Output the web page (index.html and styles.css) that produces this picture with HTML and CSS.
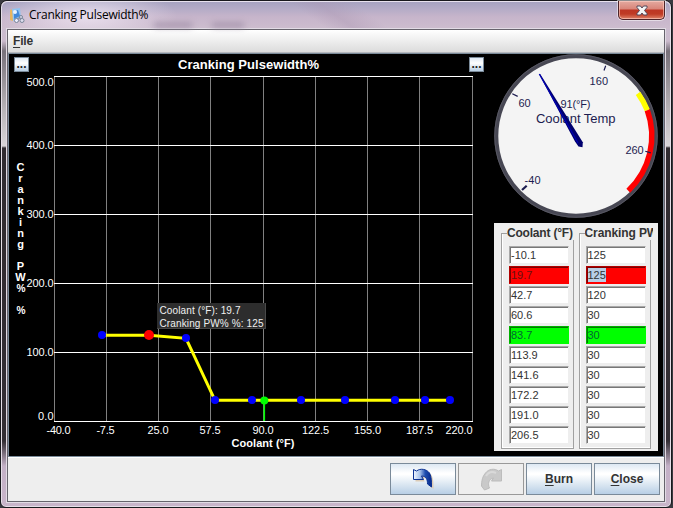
FILE: index.html
```html
<!DOCTYPE html>
<html lang="en">
<head>
    <meta charset="UTF-8">
    <title>Cranking Pulsewidth%</title>
    <link rel="stylesheet" href="styles.css">
</head>
<body>
    <div class="window">
        <div class="titlebar">
            <svg class="app-icon" width="16" height="16" viewBox="0 0 16 16">
                <path d="M1 2l3-1v12l-3-1z" fill="#e9b55c"/>
                <path d="M3 1l8-1 1 10-8 3z" fill="#91c4f0"/>
                <path d="M5 3l4-1 2 6-6 3z" fill="#4389d8"/>
                <circle cx="6" cy="4" r="2" fill="#e8f4ff"/>
                <path d="M7 12l5-3" stroke="#8898ae" stroke-width="2"/>
                <circle cx="7.500" cy="12.500" r="2" fill="#eef" stroke="#78869a"/>
                <circle cx="13" cy="12.500" r="2" fill="#dde" stroke="#78869a"/>
                <circle cx="12" cy="9" r="1.500" fill="#dde" stroke="#78869a"/>
            </svg>
            <span class="window-title">Cranking Pulsewidth%</span>
            <span class="smudge smudge-wide"></span>
            <span class="smudge"></span>
            <button class="window-close" aria-label="Close window">
                <svg width="12" height="11" viewBox="0 0 12 11">
                    <path d="M1 1h3.500L6 3 7.500 1H11v1.500L8.500 5.500 11 8.500V10H7.500L6 8 4.500 10H1V8.500l2.500-3L1 2.500z" fill="#f4f4f4" stroke="#53485a"/>
                </svg>
            </button>
        </div>

        <div class="client">
            <div class="menubar"><span class="menu"><u>F</u>ile</span></div>

            <div class="content">
                <div class="chart">
                    <svg width="479" height="402" viewBox="9 54 479 402">
                        <g class="grid-v">
                            <path d="M54.500 76V421M106.500 76V421M158.500 76V421M210.500 76V421M263.500 76V421M315.500 76V421M367.500 76V421M419.500 76V421M472.500 76V421"/>
                        </g>
                        <g class="grid-h">
                            <path d="M54 76.500H473M54 145.500H473M54 214.500H473M54 283.500H473M54 352.500H473M54 421.500H473"/>
                        </g>
                        <text class="chart-title" x="178" y="69" textLength="141">Cranking Pulsewidth%</text>
                        <g class="ticks">
                            <text x="26.500" y="86" textLength="27">500.0</text>
                            <text x="26.500" y="149" textLength="27">400.0</text>
                            <text x="26.500" y="218" textLength="27">300.0</text>
                            <text x="26.500" y="287" textLength="27">200.0</text>
                            <text x="26.500" y="356" textLength="27">100.0</text>
                            <text x="38" y="420" textLength="15.500">0.0</text>
                            <text x="46.500" y="434" textLength="24">-40.0</text>
                            <text x="96.500" y="434" textLength="18">-7.5</text>
                            <text x="147.500" y="434" textLength="21">25.0</text>
                            <text x="199.500" y="434" textLength="21">57.5</text>
                            <text x="252.500" y="434" textLength="21">90.0</text>
                            <text x="302" y="434" textLength="27">122.5</text>
                            <text x="354" y="434" textLength="27">155.0</text>
                            <text x="406" y="434" textLength="27">187.5</text>
                            <text x="445.500" y="434" textLength="27">220.0</text>
                        </g>
                        <text class="axis-x" x="231.500" y="447" textLength="63">Coolant (°F)</text>
                        <g class="axis-y">
                            <text x="20.500" y="171">C</text>
                            <text x="20.500" y="182">r</text>
                            <text x="20.500" y="193">a</text>
                            <text x="20.500" y="204">n</text>
                            <text x="20.500" y="215">k</text>
                            <text x="20.500" y="226">i</text>
                            <text x="20.500" y="237">n</text>
                            <text x="20.500" y="248">g</text>
                            <text x="20.500" y="270">P</text>
                            <text x="20.500" y="281">W</text>
                            <text class="percent" x="16.500" y="292" textLength="9" lengthAdjust="spacingAndGlyphs">%</text>
                            <text class="percent" x="16.500" y="314" textLength="9" lengthAdjust="spacingAndGlyphs">%</text>
                        </g>

                        <path class="curve" d="M102 335.300H149L186 338.300 215 400.300H450"/>
                        <g class="points">
                            <circle cx="102" cy="335" r="4"/>
                            <circle cx="186" cy="338" r="4"/>
                            <circle cx="215" cy="400" r="4"/>
                            <circle cx="252" cy="400" r="4"/>
                            <circle cx="301" cy="400" r="4"/>
                            <circle cx="345" cy="400" r="4"/>
                            <circle cx="395" cy="400" r="4"/>
                            <circle cx="425" cy="400" r="4"/>
                            <circle cx="450" cy="400" r="4"/>
                        </g>
                        <circle cx="149" cy="335" r="5" fill="#f00"/>
                        <path d="M264.300 400V421" stroke="#0f0" stroke-width="1.600"/>
                        <circle cx="264.300" cy="400.500" r="4" fill="#0f0"/>

                        <rect x="157" y="303" width="109" height="26" fill="#2d2d2d"/>
                        <path d="M157 328.500H265.500V303" fill="none" stroke="#484848"/>
                        <g class="tip">
                            <text x="159.500" y="314" textLength="81">Coolant (°F): 19.7</text>
                            <text x="159.500" y="327" textLength="104">Cranking PW% %: 125</text>
                        </g>
                    </svg>
                    <button class="more more-left">...</button>
                    <button class="more more-right">...</button>
                </div>

                <div class="side">
                    <svg class="gauge" width="164" height="165" viewBox="494 54 164 165">
                        <circle cx="576" cy="136" r="79.700" fill="#f4f4f4" stroke="#474753" stroke-width="4"/>
                        <circle cx="576" cy="136" r="81.300" fill="none" stroke="#5d5d68" stroke-width=".8"/>
                        <path d="M638 93.300A75.500 75.500 0 0 1 647.300 110.300" fill="none" stroke="#ff0" stroke-width="5.500"/>
                        <path d="M647.300 110.300A75.500 75.500 0 0 1 628.300 190.700" fill="none" stroke="#f00" stroke-width="5.500"/>
                        <g stroke="#1c1c50" stroke-width="1.200">
                            <path d="M605.700 65.700l-1.700 4.800M512.300 93.700l5.400 2.700M645.300 151.200l5.500 1.700"/>
                            <path d="M526.700 185.700l-4.700 4.300" stroke-width="2.200"/>
                        </g>
                        <g class="gauge-text">
                            <text x="589.500" y="85" textLength="18.500">160</text>
                            <text x="518.500" y="107" textLength="12">60</text>
                            <text x="625.500" y="154" textLength="18">260</text>
                            <text x="524.500" y="184" textLength="16">-40</text>
                            <text x="560.500" y="108" textLength="30">91(°F)</text>
                            <text class="gauge-name" x="536" y="123" textLength="79.500">Coolant Temp</text>
                        </g>
                        <path d="M539 74l1.200 0L582.800 142.300 582.500 147.300 578.500 146.500 575 141.500z" fill="#00006e"/>
                        <path d="M539.300 74L578 143" stroke="#0000b4" stroke-width="1.200"/>
                    </svg>

                    <div class="table">
                        <fieldset class="column column-x">
                            <legend>Coolant (°F)</legend>
                            <div class="cell">-10.1</div>
                            <div class="cell selected">19.7</div>
                            <div class="cell">42.7</div>
                            <div class="cell">60.6</div>
                            <div class="cell active">83.7</div>
                            <div class="cell">113.9</div>
                            <div class="cell">141.6</div>
                            <div class="cell">172.2</div>
                            <div class="cell">191.0</div>
                            <div class="cell">206.5</div>
                        </fieldset>
                        <fieldset class="column">
                            <legend>Cranking PW</legend>
                            <div class="cell">125</div>
                            <div class="cell selected"><span class="highlight">125</span></div>
                            <div class="cell">120</div>
                            <div class="cell">30</div>
                            <div class="cell active">30</div>
                            <div class="cell">30</div>
                            <div class="cell">30</div>
                            <div class="cell">30</div>
                            <div class="cell">30</div>
                            <div class="cell">30</div>
                        </fieldset>
                    </div>
                </div>
            </div>

            <div class="buttons">
                <button class="btn" aria-label="Undo">
                    <svg width="24" height="24" viewBox="0 0 24 24">
                        <defs>
                            <linearGradient id="undo" x1="0" y1="0" x2="1" y2="0">
                                <stop offset="0" stop-color="#f0f6ff"/>
                                <stop offset=".35" stop-color="#a9c3ea"/>
                                <stop offset=".65" stop-color="#1f4fb0"/>
                                <stop offset="1" stop-color="#06288c"/>
                            </linearGradient>
                        </defs>
                        <path d="M3 3l3 1.500c4-3 10-2 13 2 2 4 2 8 2 14l-4-3c0-4-1-8-6-8l1 3.500H3z" fill="#dccbb5" transform="translate(1.500 1.500)"/>
                        <path d="M2.500 2.500l3 1.500c4-3 10-2 13 2 2 4 2 8 2 14l-4-3c0-4-1-8-6-8l2 3.500h-10z" fill="url(#undo)" stroke="#0b3192"/>
                    </svg>
                </button>
                <button class="btn btn-disabled" disabled aria-label="Redo">
                    <svg width="24" height="24" viewBox="0 0 24 24">
                        <path d="M22.500 2.500l-3 1.500c-4-3-10-2-13 2-3 3-4 8-4 13l3 4 5-2c-2-4-1-9 4-10l-2 3h10z" fill="#c9c9c9" stroke="#bcbcbc"/>
                        <path d="M17 6c-4-2-8-1-10 3" fill="none" stroke="#d9d9d9" stroke-width="2"/>
                    </svg>
                </button>
                <button class="btn"><span><u>B</u>urn</span></button>
                <button class="btn"><span><u>C</u>lose</span></button>
            </div>
        </div>
    </div>
</body>
</html>
```
FILE: styles.css
```css
* {
    box-sizing: border-box;
}

body {
    margin: 0;
    width: 673px;
    height: 508px;
    overflow: hidden;
    background: #3a3a40;
    font-family: "Liberation Sans", Arial, sans-serif;
}

button {
    margin: 0;
    padding: 0;
    font-family: inherit;
}

.window {
    width: 672px;
    height: 508px;
    padding: 0 6px 5px;
    border: 1px solid #19191d;
    border-radius: 7px 7px 6px 6px;
    box-shadow: inset 0 0 0 1px #e6dfe8;
    background: linear-gradient(180deg, #c8bfd3 0, #cbbbcd 40px, #77717a 50px, #b9b5b9 110px, #d8d5d8 145px, #302b30 147px, #332e34 440px, #c3b0c6 465px, #c9b5ca 100%);
}

.titlebar {
    display: flex;
    height: 28px;
    margin: 0 -5px;
    padding-left: 7px;
    border-top: 1px solid #e8e2ee;
    border-radius: 6px 6px 0 0;
    background:
        radial-gradient(ellipse 90px 28px at 85px 14px, rgba(244, 236, 248, .75), transparent),
        linear-gradient(35deg, transparent 46%, rgba(170, 150, 178, .4) 50%, transparent 55%),
        linear-gradient(180deg, #a7a3c1 0, #b9aec8 9px, #c7b5cb 15px, #cdbdce 100%);
}

.app-icon {
    margin-top: 6px;
}

.window-title {
    margin: 5px 0 0 4px;
    width: 121px;
    font: 12px/16px "Open Sans", "Noto Sans", sans-serif;
    letter-spacing: -.25px;
    white-space: nowrap;
    color: #000;
}

.smudge {
    width: 32px;
    height: 4px;
    margin: 21px 0 0 20px;
    background: #9c8ba4;
    filter: blur(3px);
}

.smudge-wide {
    width: 38px;
    margin-left: 4px;
}

.window-close {
    display: flex;
    align-items: center;
    justify-content: center;
    width: 47px;
    height: 19px;
    margin: -1px 5px 0 auto;
    border: 1px solid #4c2328;
    border-top: 0;
    border-radius: 0 0 5px 5px;
    background: linear-gradient(180deg, #e4aaa0 0, #d98579 8px, #bd3624 9px, #bf3b25 13px, #df8268 100%);
    box-shadow: inset 0 0 0 1px rgba(255, 210, 200, .6), 0 0 0 1px rgba(255, 255, 255, .5);
}

.client {
    height: 473px;
    margin: 0;
    border: 1px solid #66636c;
    box-shadow: 0 0 0 1px #e2dce5;
    background: #eee;
}

.menubar {
    height: 23px;
    padding: 3px 0 0 5px;
    border-bottom: 1px solid #b5b8bd;
    background: linear-gradient(180deg, #fff, #dcdcdc);
    font-size: 12px;
    font-weight: bold;
    line-height: 16px;
    letter-spacing: -.2px;
    color: #333;
}

u {
    text-underline-offset: 2px;
}

.content {
    display: flex;
    height: 404px;
    border: 1px solid #7a8a99;
    background: #000;
}

.chart {
    position: relative;
    width: 485px;
}

.chart svg {
    display: block;
}

.chart text {
    fill: #fff;
    font-size: 11px;
}

.grid-v path {
    stroke: #808080;
}

.grid-h path {
    stroke: #fff;
}

.chart .chart-title {
    font-size: 13px;
    font-weight: bold;
}

.chart .axis-x,
.axis-y text {
    font-weight: bold;
}

.axis-y text {
    text-anchor: middle;
}

.axis-y .percent {
    text-anchor: start;
}

.chart .tip text {
    font-size: 10px;
    fill: #f0f0f0;
}

.curve {
    fill: none;
    stroke: #ff0;
    stroke-width: 3;
}

.points circle {
    fill: #00f;
}

/* corner buttons over the chart */
.more {
    position: absolute;
    top: 3px;
    width: 15px;
    height: 15px;
    border: 1px solid #7a8a99;
    background: linear-gradient(180deg, #dfe9f4, #fff 40%, #b8cfe5);
    color: #222;
    font-size: 12px;
    font-weight: bold;
    line-height: 11px;
}

.more-left {
    left: 5px;
}

.more-right {
    left: 460px;
}

.side {
    width: 164px;
}

.gauge {
    display: block;
}

.gauge-text text {
    fill: #1c1c50;
    font-size: 11px;
}

.gauge-text .gauge-name {
    font-size: 13px;
}

.table {
    display: flex;
    gap: 5px;
    height: 228px;
    margin-top: 4px;
    padding: 3px 7px 2px;
    background: #eee;
}

.column {
    min-width: 0;
    width: 73px;
    height: 223px;
    margin: 0;
    padding: 6px 4px 0 6px;
    border: 1px solid #a0a0a0;
    box-shadow: inset 1px 0 #fff, inset 0 -1px #fff;
}

.column-x {
    padding-left: 7px;
}

.column legend {
    width: 68px;
    margin-left: -1px;
    padding: 0;
    overflow: hidden;
    white-space: nowrap;
    font-size: 12px;
    font-weight: bold;
    line-height: 14px;
    letter-spacing: -.1px;
    color: #333;
}

.column-x legend {
    margin-left: -2px;
    letter-spacing: -.2px;
}

.cell {
    width: 60px;
    height: 18px;
    margin-bottom: 2px;
    border: 1px solid #a8a8a8;
    border-right-color: #eee;
    border-bottom-color: #eee;
    box-shadow: inset 1px 1px #777;
    background: #fff;
    padding-left: 1px;
    font-size: 11px;
    line-height: 17px;
    color: #333;
}

.selected {
    background: #f00;
    border-color: #b00000 #f00 #f00 #b00000;
    box-shadow: inset 1px 1px #7b0000;
    color: #611;
}

.active {
    background: #0f0;
    border-color: #00b000 #0f0 #0f0 #00b000;
    box-shadow: inset 1px 1px #007b00;
    color: #063;
}

.highlight {
    display: inline-block;
    height: 14px;
    margin-top: 1px;
    line-height: 14px;
    background: #b8cfe5;
    color: #333;
}

.buttons {
    display: flex;
    justify-content: flex-end;
    gap: 2px;
    height: 44px;
    padding: 5px 4px 0 0;
    border-top: 1px solid #fff;
}

.btn {
    display: flex;
    align-items: center;
    justify-content: center;
    width: 66px;
    height: 32px;
    border: 1px solid #7a8a99;
    background: linear-gradient(180deg, #dde8f3 0, #fff 30%, #fff 35%, #b8cfe5 100%);
    font-size: 12px;
    font-weight: bold;
    color: #333;
}

.btn-disabled {
    border-color: #999;
    background: #eee;
}
```
